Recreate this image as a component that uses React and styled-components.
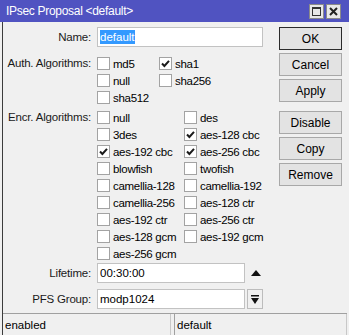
import React from "react";
import styled, { createGlobalStyle } from "styled-components";

const Global = createGlobalStyle`
  html, body { margin: 0; padding: 0; background: #f0f0f0; }
  body { font-family: "Liberation Sans", Arial, sans-serif; font-size: 11px; color: #000; }
`;

const Window = styled.div`
  width: 349px;
  height: 335px;
  display: flex;
  flex-direction: column;
  background: #f0f0f0;
  overflow: hidden;
`;

const TitleBar = styled.div`
  height: 22px;
  flex: none;
  background: #5053c1;
  color: #fff;
  display: flex;
  align-items: center;
  padding: 0 8px 0 6px;
  font-size: 12px;
  letter-spacing: -0.3px;
`;

const TitleText = styled.div`
  flex: 1;
`;

const TitleButtons = styled.div`
  display: flex;
  gap: 2px;
`;

const TitleBtn = styled.div`
  width: 13px;
  height: 13px;
  background: #e8e8e8;
  border: 1px solid #8a8a8a;
  display: flex;
  align-items: center;
  justify-content: center;
`;

const Frame = styled.div`
  flex: 1;
  display: flex;
  flex-direction: column;
  padding-left: 2px;
  background: #f0f0f0;
`;

const Inner = styled.div`
  flex: 1;
  display: flex;
  flex-direction: column;
  border-left: 1px solid #3c3c3c;
`;

const Main = styled.div`
  flex: 1;
  display: flex;
  padding: 5px 7px 0 0;
`;

const Form = styled.div`
  flex: 1;
  display: grid;
  grid-template-columns: 88px 1fr;
  column-gap: 6px;
  align-content: start;
`;

const Label = styled.div`
  text-align: right;
  height: ${(p) => p.$h || 17}px;
  line-height: ${(p) => p.$h || 17}px;
  margin-top: ${(p) => p.$mt || 0}px;
  color: #1a1a1a;
  font-size: 11.5px;
  letter-spacing: -0.2px;
`;

const Field = styled.div`
  margin-top: ${(p) => p.$mt || 0}px;
  display: flex;
  align-items: center;
  gap: ${(p) => p.$gap || 0}px;
`;

const Input = styled.div`
  width: ${(p) => p.$w}px;
  height: 20px;
  box-sizing: border-box;
  background: #fff;
  border: 1px solid #c2c2c2;
  display: flex;
  align-items: center;
  padding-left: 2px;
  font-size: 11.5px;
`;

const Selected = styled.span`
  background: #3399ff;
  color: #fff;
  padding: 1px 0;
`;

const CheckGrid = styled.div`
  display: grid;
  grid-template-columns: ${(p) => p.$cols};
  grid-auto-rows: 17px;
  margin-top: ${(p) => p.$mt || 0}px;
`;

const CheckItem = styled.div`
  display: flex;
  align-items: center;
  gap: 3px;
  white-space: nowrap;
  font-size: 11.5px;
  letter-spacing: -0.3px;
`;

const Box = styled.div`
  width: 13px;
  height: 13px;
  box-sizing: border-box;
  border: 1px solid #a3a3a3;
  background: #fff;
  display: flex;
  align-items: center;
  justify-content: center;
`;

const ButtonCol = styled.div`
  width: 63px;
  display: flex;
  flex-direction: column;
  gap: 3px;
`;

const Btn = styled.div`
  height: 23px;
  box-sizing: border-box;
  border: 1px solid ${(p) => (p.$default ? "#2b2b2b" : "#a8a8a8")};
  background: #e3e3e3;
  display: flex;
  align-items: center;
  justify-content: center;
  font-size: 12px;
  margin-top: ${(p) => p.$mt || 0}px;
`;

const ArrowBtn = styled.div`
  width: 16px;
  height: 20px;
  box-sizing: border-box;
  border: 1px solid #bcbcbc;
  display: flex;
  align-items: center;
  justify-content: center;
`;

const ArrowPlain = styled.div`
  width: 16px;
  height: 20px;
  display: flex;
  align-items: center;
  justify-content: center;
  margin-left: 3px;
`;

const StatusBar = styled.div`
  height: 21px;
  flex: none;
  display: flex;
  border-top: 1px solid #a0a0a0;
  margin-right: 2px;
`;

const StatusCell = styled.div`
  flex: ${(p) => p.$flex};
  border-right: 1px solid #c8c8c8;
  border-left: ${(p) => (p.$sep ? "1px solid #a0a0a0" : "none")};
  margin-left: ${(p) => (p.$sep ? 3 : 0)}px;
  padding-left: 2px;
  display: flex;
  align-items: center;
  font-size: 11.5px;
`;

const Check = ({ on, label }) => (
  <CheckItem>
    <Box>
      {on && (
        <svg width="9" height="9" viewBox="0 0 9 9">
          <path d="M1 4.5 L3.4 7 L8 1.8" stroke="#1a1a1a" strokeWidth="2" fill="none" />
        </svg>
      )}
    </Box>
    {label}
  </CheckItem>
);

const auth = [
  ["md5", false], ["sha1", true],
  ["null", false], ["sha256", false],
  ["sha512", false],
];

const encr = [
  ["null", false], ["des", false],
  ["3des", false], ["aes-128 cbc", true],
  ["aes-192 cbc", true], ["aes-256 cbc", true],
  ["blowfish", false], ["twofish", false],
  ["camellia-128", false], ["camellia-192", false],
  ["camellia-256", false], ["aes-128 ctr", false],
  ["aes-192 ctr", false], ["aes-256 ctr", false],
  ["aes-128 gcm", false], ["aes-192 gcm", false],
  ["aes-256 gcm", false],
];

export default function App() {
  return (
    <>
      <Global />
      <Window>
        <TitleBar>
          <TitleText>IPsec Proposal &lt;default&gt;</TitleText>
          <TitleButtons>
            <TitleBtn>
              <svg width="9" height="9" viewBox="0 0 9 9">
                <rect x="0.5" y="0.5" width="8" height="8" fill="none" stroke="#333" strokeWidth="1" />
                <line x1="0" y1="1.5" x2="9" y2="1.5" stroke="#333" strokeWidth="1" />
              </svg>
            </TitleBtn>
            <TitleBtn>
              <svg width="9" height="9" viewBox="0 0 9 9">
                <path d="M1 1 L8 8 M8 1 L1 8" stroke="#222" strokeWidth="2" />
              </svg>
            </TitleBtn>
          </TitleButtons>
        </TitleBar>
        <Frame>
          <Inner>
            <Main>
              <Form>
                <Label $h={20}>Name:</Label>
                <Field>
                  <Input $w={166}>
                    <Selected>default</Selected>
                  </Input>
                </Field>

                <Label $mt={8}>Auth. Algorithms:</Label>
                <CheckGrid $cols="62px 1fr" $mt={8}>
                  {auth.map(([l, on]) => (
                    <Check key={l} on={on} label={l} />
                  ))}
                </CheckGrid>

                <Label $mt={3}>Encr. Algorithms:</Label>
                <CheckGrid $cols="87px 1fr" $mt={3}>
                  {encr.map(([l, on]) => (
                    <Check key={l} on={on} label={l} />
                  ))}
                </CheckGrid>

                <Label $h={20} $mt={1}>Lifetime:</Label>
                <Field $mt={1}>
                  <Input $w={148}>00:30:00</Input>
                  <ArrowPlain>
                    <svg width="10" height="6" viewBox="0 0 10 6">
                      <path d="M0 6 L5 0 L10 6 Z" fill="#111" />
                    </svg>
                  </ArrowPlain>
                </Field>

                <Label $h={20} $mt={6}>PFS Group:</Label>
                <Field $mt={6} $gap={2}>
                  <Input $w={148}>modp1024</Input>
                  <ArrowBtn>
                    <svg width="8" height="9" viewBox="0 0 8 9">
                      <rect x="0" y="0" width="8" height="1.5" fill="#111" />
                      <path d="M0 3 L8 3 L4 9 Z" fill="#111" />
                    </svg>
                  </ArrowBtn>
                </Field>
              </Form>
              <ButtonCol>
                <Btn $default>OK</Btn>
                <Btn>Cancel</Btn>
                <Btn>Apply</Btn>
                <Btn $mt={6}>Disable</Btn>
                <Btn>Copy</Btn>
                <Btn>Remove</Btn>
              </ButtonCol>
            </Main>
            <StatusBar>
              <StatusCell $flex="0 0 165px">enabled</StatusCell>
              <StatusCell $flex="1" $sep>default</StatusCell>
            </StatusBar>
          </Inner>
        </Frame>
      </Window>
    </>
  );
}
